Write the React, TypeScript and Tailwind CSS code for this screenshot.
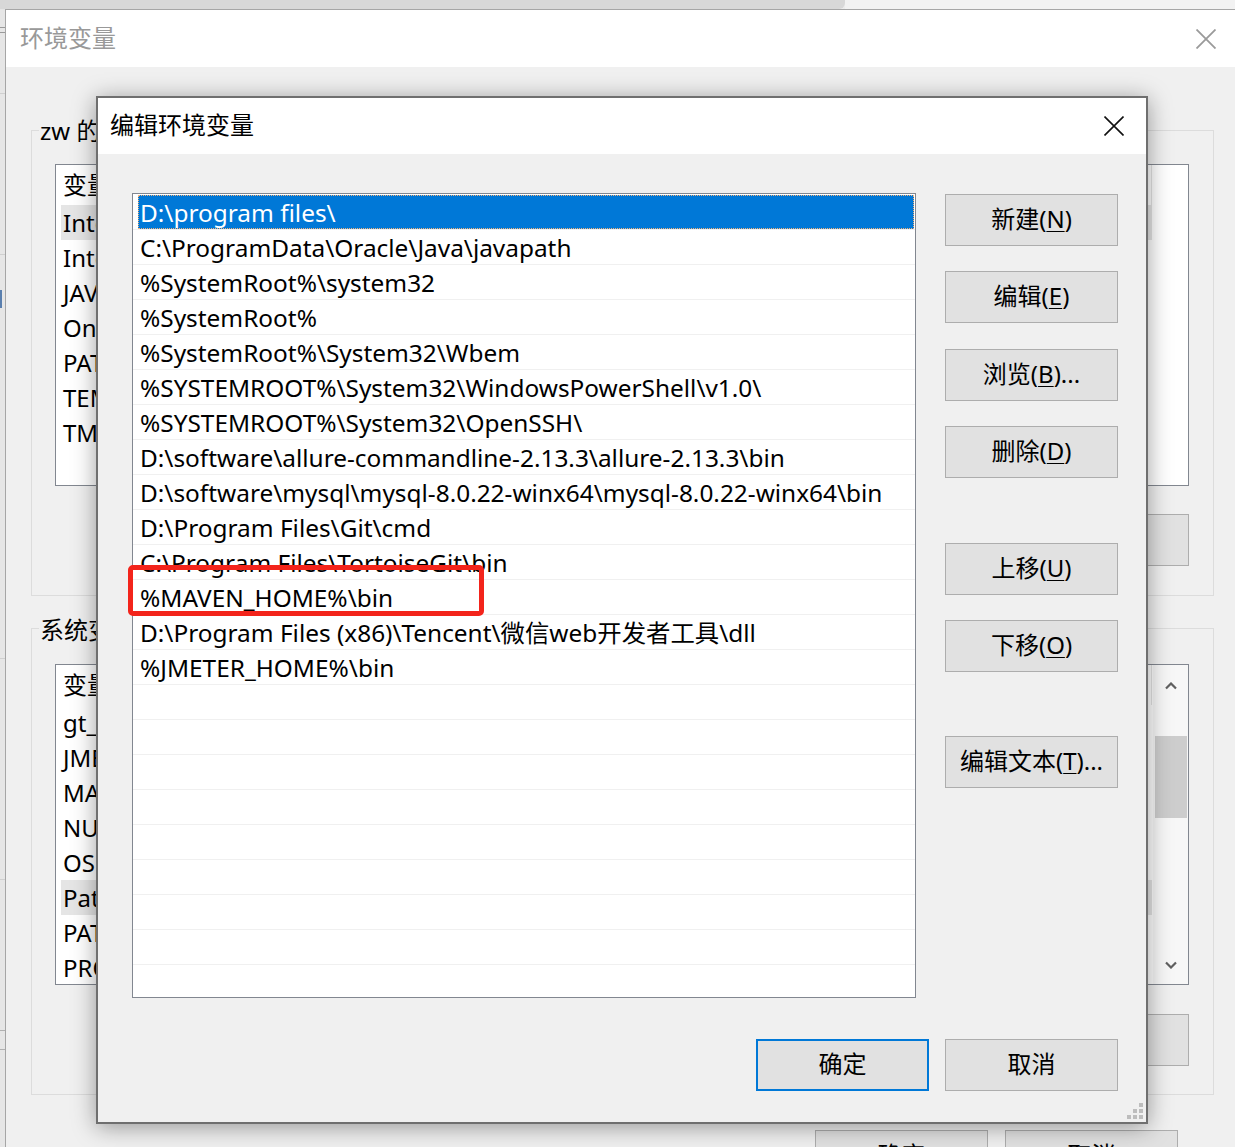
import React from "react";

const paths: string[] = [
  "D:\\program files\\",
  "C:\\ProgramData\\Oracle\\Java\\javapath",
  "%SystemRoot%\\system32",
  "%SystemRoot%",
  "%SystemRoot%\\System32\\Wbem",
  "%SYSTEMROOT%\\System32\\WindowsPowerShell\\v1.0\\",
  "%SYSTEMROOT%\\System32\\OpenSSH\\",
  "D:\\software\\allure-commandline-2.13.3\\allure-2.13.3\\bin",
  "D:\\software\\mysql\\mysql-8.0.22-winx64\\mysql-8.0.22-winx64\\bin",
  "D:\\Program Files\\Git\\cmd",
  "C:\\Program Files\\TortoiseGit\\bin",
  "%MAVEN_HOME%\\bin",
  "D:\\Program Files (x86)\\Tencent\\微信web开发者工具\\dll",
  "%JMETER_HOME%\\bin",
  "",
  "",
  "",
  "",
  "",
  "",
  "",
  "",
];

const userVars = ["Intel", "Intel", "JAVA_HOME", "OneDrive", "PATH", "TEMP", "TMP"];
const sysVars = ["gt_", "JMETER_HOME", "MAVEN_HOME", "NUMBER_OF_PROCESSORS", "OS", "Path", "PATHEXT", "PROCESSOR_ARCHITECTURE"];

function Btn({
  children,
  className = "",
  focus = false,
}: {
  children: React.ReactNode;
  className?: string;
  focus?: boolean;
}) {
  return (
    <div
      className={
        "w-[173px] h-[52px] bg-[#e1e1e1] flex items-center justify-center text-[24px] leading-none text-black shrink-0 " +
        (focus ? "border-2 border-[#0078d7] " : "border border-[#adadad] ") +
        className
      }
    >
      <span className="-mt-[2px] whitespace-nowrap">{children}</span>
    </div>
  );
}

function U({ children }: { children: React.ReactNode }) {
  return <span className="underline decoration-1 underline-offset-[3px]">{children}</span>;
}

function XIcon({ color, size, stroke }: { color: string; size: number; stroke: number }) {
  return (
    <svg width={size} height={size} viewBox="0 0 20 20">
      <path d="M0.5 0.5 L19.5 19.5 M19.5 0.5 L0.5 19.5" stroke={color} strokeWidth={stroke} fill="none" />
    </svg>
  );
}

export default function App() {
  return (
    <div className="relative w-[1235px] h-[1147px] overflow-hidden bg-[#ececec] font-['Segoe_UI','Noto_Sans','Noto_Sans_CJK_SC',sans-serif] text-black">
      {/* desktop strips behind */}
      <div className="absolute left-0 top-0 w-[845px] h-[9px] bg-[#d8d8d8] rounded-br-[6px]" />
      <div className="absolute left-[845px] top-0 right-0 h-[9px] bg-[#f2f2f2]" />
      <div className="absolute left-0 top-[9px] w-[5px] bottom-0 bg-[#e6e6e6] flex flex-col">
        <div className="h-[18px]" />
        <div className="h-[6px] border-y border-[#9a9a9a]" />
        <div className="h-[60px]" />
        <div className="h-px bg-[#cfcfcf]" />
        <div className="h-[160px]" />
        <div className="h-px bg-[#cfcfcf]" />
        <div className="h-[35px]" />
        <div className="h-[18px] bg-[#5a7fae] w-[2px]" />
        <div className="h-[350px]" />
        <div className="h-px bg-[#cfcfcf]" />
        <div className="h-[220px]" />
        <div className="h-px bg-[#cfcfcf]" />
        <div className="h-[150px]" />
        <div className="h-px bg-[#b0b0b0]" />
        <div className="h-[18px]" />
        <div className="h-px bg-[#b0b0b0]" />
      </div>

      {/* background window: 环境变量 */}
      <div className="absolute left-[5px] top-[9px] right-0 bottom-0 border-l border-t border-[#a6a6a6] bg-[#f0f0f0] flex flex-col">
        <div className="h-[57px] bg-white flex items-center justify-between shrink-0">
          <span className="pl-[14px] text-[24px] leading-none text-[#999999] -mt-[2px]">环境变量</span>
          <div className="mr-[19px] flex items-center">
            <XIcon color="#9a9a9a" size={20} stroke={1.8} />
          </div>
        </div>
        <div className="flex flex-col pl-[25px] pr-[21px]">
          {/* group 1 */}
          <div className="relative mt-[63px] h-[466px] border border-[#dcdcdc] flex flex-col">
            <span className="absolute left-[7px] -top-[14px] px-[1px] bg-[#f0f0f0] text-[24px] leading-[28px] whitespace-nowrap">
              zw 的用户变量(U)
            </span>
            <div className="mt-[33px] ml-[23px] mr-[24px] h-[322px] border border-[#828790] bg-white overflow-hidden flex flex-col">
              <div className="h-[40px] flex shrink-0">
                <div className="w-[1096px] border-r border-[#e5e5e5] flex items-center pl-[7px] text-[24px]">变量</div>
              </div>
              {userVars.map((v, i) => (
                <div
                  key={i}
                  className={
                    "h-[35px] ml-[5px] w-[1091px] pl-[2px] flex items-center text-[24px] shrink-0 " +
                    (i === 0 ? "bg-[#e5e5e5]" : "")
                  }
                >
                  {v}
                </div>
              ))}
            </div>
            <Btn className="mt-[28px] self-end mr-[24px]">删除(D)</Btn>
          </div>

          {/* group 2 */}
          <div className="relative mt-[32px] h-[467px] border border-[#dcdcdc] flex flex-col">
            <span className="absolute left-[7px] -top-[13px] px-[1px] bg-[#f0f0f0] text-[24px] leading-[28px] whitespace-nowrap">
              系统变量(S)
            </span>
            <div className="mt-[35px] ml-[23px] mr-[24px] h-[321px] border border-[#828790] bg-white overflow-hidden flex">
              <div className="flex-1 flex flex-col">
                <div className="h-[40px] flex shrink-0">
                  <div className="w-[1096px] border-r border-[#e5e5e5] flex items-center pl-[7px] text-[24px]">变量</div>
                </div>
                {sysVars.map((v, i) => (
                  <div
                    key={i}
                    className={
                      "h-[35px] ml-[5px] w-[1091px] pl-[2px] flex items-center text-[24px] shrink-0 " +
                      (i === 5 ? "bg-[#e5e5e5]" : "")
                    }
                  >
                    {v}
                  </div>
                ))}
              </div>
              <div className="w-[35px] bg-[#f7f7f7] flex flex-col items-center shrink-0">
                <div className="h-[38px] flex items-center justify-center mt-[2px]">
                  <svg width="12" height="8" viewBox="0 0 12 8">
                    <path d="M1 6.5 L6 1.5 L11 6.5" stroke="#606060" strokeWidth="2.2" fill="none" />
                  </svg>
                </div>
                <div className="mt-[31px] w-[32px] h-[82px] bg-[#cdcdcd]" />
                <div className="flex-1" />
                <div className="h-[38px] flex items-center justify-center">
                  <svg width="12" height="8" viewBox="0 0 12 8">
                    <path d="M1 1.5 L6 6.5 L11 1.5" stroke="#606060" strokeWidth="2.2" fill="none" />
                  </svg>
                </div>
              </div>
            </div>
            <Btn className="mt-[29px] self-end mr-[24px]">删除(L)</Btn>
          </div>

          {/* bottom buttons */}
          <div className="mt-[35px] flex justify-end gap-[17px] pr-[36px]">
            <Btn>确定</Btn>
            <Btn>取消</Btn>
          </div>
        </div>
      </div>

      {/* foreground dialog: 编辑环境变量 */}
      <div className="absolute left-[96px] top-[96px] w-[1052px] h-[1028px] border-2 border-[#6f6f6f] bg-[#f0f0f0] shadow-[0_3px_22px_rgba(0,0,0,0.38)] flex flex-col">
        <div className="h-[56px] bg-white flex items-center justify-between shrink-0">
          <span className="pl-[12px] text-[24px] leading-none -mt-[2px]">编辑环境变量</span>
          <div className="mr-[22px] flex items-center">
            <XIcon color="#111111" size={20} stroke={1.6} />
          </div>
        </div>
        <div className="flex-1 flex flex-col pl-[34px] pr-[28px] pt-[39px]">
          <div className="flex gap-[29px]">
            {/* list */}
            <div className="relative w-[784px] h-[805px] border border-[#828790] bg-white pt-px">
              {paths.map((p, i) => (
                <div key={i} className="h-[35px] border-b border-[#f0f0f0] pl-[5px] pr-px">
                  <div
                    className={
                      "h-[34px] flex items-center pl-[2px] pt-[2px] text-[24.4px] whitespace-nowrap " +
                      (i === 0
                        ? "bg-[#0078d7] text-white outline-1 outline-dotted outline-[#f2b27a] -outline-offset-1"
                        : "")
                    }
                  >
                    {p}
                  </div>
                </div>
              ))}
              <div className="absolute left-[-5px] top-[371px] w-[356px] h-[51px] border-[5px] border-[#f3241b] rounded-[5px]" />
            </div>
            {/* buttons */}
            <div className="flex flex-col mt-[1px]">
              <Btn>
                新建(<U>N</U>)
              </Btn>
              <Btn className="mt-[25px]">
                编辑(<U>E</U>)
              </Btn>
              <Btn className="mt-[26px]">
                浏览(<U>B</U>)...
              </Btn>
              <Btn className="mt-[25px]">
                删除(<U>D</U>)
              </Btn>
              <Btn className="mt-[65px]">
                上移(<U>U</U>)
              </Btn>
              <Btn className="mt-[25px]">
                下移(<U>O</U>)
              </Btn>
              <Btn className="mt-[64px]">
                编辑文本(<U>T</U>)...
              </Btn>
            </div>
          </div>
          <div className="mt-[41px] flex justify-end gap-[16px]">
            <Btn focus>确定</Btn>
            <Btn>取消</Btn>
          </div>
        </div>
        {/* resize grip */}
        <svg className="absolute right-[3px] bottom-[3px]" width="16" height="16" viewBox="0 0 16 16">
          <rect x="12" y="0" width="4" height="4" fill="#bdbdbd" />
          <rect x="6" y="6" width="4" height="4" fill="#bdbdbd" />
          <rect x="12" y="6" width="4" height="4" fill="#bdbdbd" />
          <rect x="0" y="12" width="4" height="4" fill="#bdbdbd" />
          <rect x="6" y="12" width="4" height="4" fill="#bdbdbd" />
          <rect x="12" y="12" width="4" height="4" fill="#bdbdbd" />
        </svg>
      </div>
    </div>
  );
}
